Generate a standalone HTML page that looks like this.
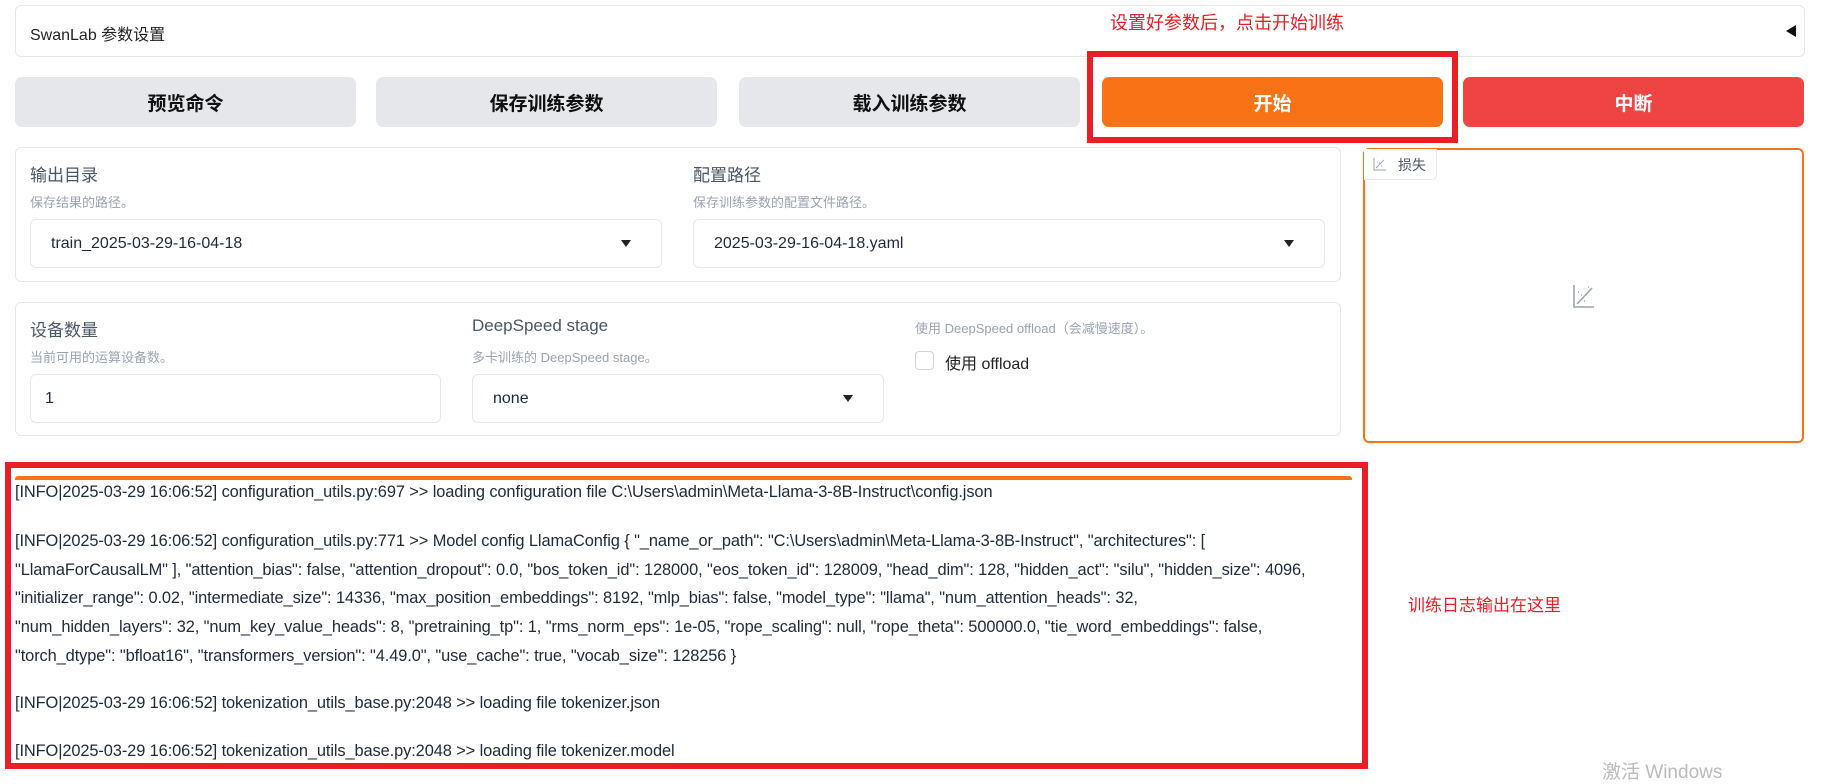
<!DOCTYPE html>
<html><head><meta charset="utf-8">
<style>
*{box-sizing:border-box;margin:0;padding:0}
body{width:1830px;height:774px;background:#fff;position:relative;overflow:hidden;font-family:"Liberation Sans","Noto Sans CJK SC",sans-serif;color:#1f2937}
.abs{position:absolute}
.box{position:absolute;border:1px solid #e5e7eb;border-radius:6px;background:#fff}
.btn{position:absolute;top:77px;height:50px;width:341px;border-radius:7px;background:#e5e7eb;font-weight:bold;font-size:19px;display:flex;align-items:center;justify-content:center;color:#111}
.lbl{position:absolute;font-size:17px;color:#4b5563}
.desc{position:absolute;font-size:13px;color:#9ca3af}
.inp{position:absolute;height:49px;border:1px solid #e5e7eb;border-radius:6px;font-size:16px;color:#1f2937;padding-left:20px;display:flex;align-items:center}
.arr{position:absolute;right:30px;top:20px;width:0;height:0;border-left:5px solid transparent;border-right:5px solid transparent;border-top:7px solid #222}
.log{position:absolute;left:15px;font-size:16.4px;color:#1f2937;white-space:nowrap;letter-spacing:-0.1px}
</style></head><body>
<div class="box" style="left:15px;top:5px;width:1790px;height:52px"></div>
<div class="abs" style="left:30px;top:21px;font-size:16px;color:#222">SwanLab 参数设置</div>
<div class="abs" style="left:1786px;top:25px;width:0;height:0;border-top:6px solid transparent;border-bottom:6px solid transparent;border-right:10px solid #111"></div>
<div class="abs" style="left:1110px;top:9px;font-size:18px;color:#ee1c25">设置好参数后，点击开始训练</div>

<div class="btn" style="left:15px">预览命令</div>
<div class="btn" style="left:376px">保存训练参数</div>
<div class="btn" style="left:739px">载入训练参数</div>
<div class="btn" style="left:1102px;background:#f97316;color:#fff">开始</div>
<div class="btn" style="left:1463px;background:#ef4444;color:#fff">中断</div>
<div class="abs" style="left:1087px;top:51px;width:371px;height:92px;border:6px solid #ee1c25"></div>

<div class="box" style="left:15px;top:147px;width:1326px;height:135px"></div>
<div class="lbl" style="left:30px;top:161px">输出目录</div>
<div class="desc" style="left:30px;top:192px">保存结果的路径。</div>
<div class="inp" style="left:30px;top:219px;width:632px">train_2025-03-29-16-04-18<div class="arr"></div></div>
<div class="lbl" style="left:693px;top:161px">配置路径</div>
<div class="desc" style="left:693px;top:192px">保存训练参数的配置文件路径。</div>
<div class="inp" style="left:693px;top:219px;width:632px">2025-03-29-16-04-18.yaml<div class="arr"></div></div>

<div class="box" style="left:15px;top:302px;width:1326px;height:134px"></div>
<div class="lbl" style="left:30px;top:316px">设备数量</div>
<div class="desc" style="left:30px;top:347px">当前可用的运算设备数。</div>
<div class="inp" style="left:30px;top:374px;width:411px;padding-left:14px">1</div>
<div class="lbl" style="left:472px;top:316px">DeepSpeed stage</div>
<div class="desc" style="left:472px;top:347px">多卡训练的 DeepSpeed stage。</div>
<div class="inp" style="left:472px;top:374px;width:412px">none<div class="arr"></div></div>
<div class="desc" style="left:915px;top:318px">使用 DeepSpeed offload（会减慢速度）。</div>
<div class="abs" style="left:915px;top:351px;width:19px;height:19px;border:1px solid #d1d5db;border-radius:4px"></div>
<div class="abs" style="left:945px;top:350px;font-size:16px;color:#222">使用 offload</div>

<div class="abs" style="left:1363px;top:148px;width:441px;height:295px;border:2px solid #f97316;border-radius:6px"></div>
<div class="abs" style="left:1364px;top:149px;width:73px;height:31px;border:1px solid #e5e7eb;border-top:none;border-left:none;border-radius:0 0 5px 0;background:#fff;font-size:14px;color:#4b5563;padding:6px 0 0 34px">损失</div>
<svg class="abs" style="left:1373px;top:157px" width="14" height="14" viewBox="0 0 14 14" fill="none" stroke="#9ca3af" stroke-width="1"><path d="M1 1V13H13M3 11L11 3M4 5h1M8 9h1M6 6h1"/></svg>
<svg class="abs" style="left:1573px;top:284px" width="22" height="24" viewBox="0 0 22 24" fill="none" stroke="#9ca3af" stroke-width="1.6"><path d="M1 1V23H21M4 20L19 4M5 8h1M11 17h1M8 11h1M15 3h1"/></svg>

<div class="abs" style="left:15px;top:476px;width:1337px;height:4px;background:#f97316;border-radius:3px 3px 0 0"></div>
<div class="log" style="top:483px">[INFO|2025-03-29 16:06:52] configuration_utils.py:697 &gt;&gt; loading configuration file C:\Users\admin\Meta-Llama-3-8B-Instruct\config.json</div>
<div class="log" style="top:532px">[INFO|2025-03-29 16:06:52] configuration_utils.py:771 &gt;&gt; Model config LlamaConfig { "_name_or_path": "C:\Users\admin\Meta-Llama-3-8B-Instruct", "architectures": [</div>
<div class="log" style="top:561px">"LlamaForCausalLM" ], "attention_bias": false, "attention_dropout": 0.0, "bos_token_id": 128000, "eos_token_id": 128009, "head_dim": 128, "hidden_act": "silu", "hidden_size": 4096,</div>
<div class="log" style="top:589px">"initializer_range": 0.02, "intermediate_size": 14336, "max_position_embeddings": 8192, "mlp_bias": false, "model_type": "llama", "num_attention_heads": 32,</div>
<div class="log" style="top:618px">"num_hidden_layers": 32, "num_key_value_heads": 8, "pretraining_tp": 1, "rms_norm_eps": 1e-05, "rope_scaling": null, "rope_theta": 500000.0, "tie_word_embeddings": false,</div>
<div class="log" style="top:647px">"torch_dtype": "bfloat16", "transformers_version": "4.49.0", "use_cache": true, "vocab_size": 128256 }</div>
<div class="log" style="top:694px">[INFO|2025-03-29 16:06:52] tokenization_utils_base.py:2048 &gt;&gt; loading file tokenizer.json</div>
<div class="log" style="top:742px">[INFO|2025-03-29 16:06:52] tokenization_utils_base.py:2048 &gt;&gt; loading file tokenizer.model</div>
<div class="abs" style="left:5px;top:462px;width:1363px;height:307px;border:6px solid #ee1c25"></div>
<div class="abs" style="left:1408px;top:591px;font-size:17px;color:#ee1c25">训练日志输出在这里</div>
<div class="abs" style="left:1602px;top:757px;font-size:19px;color:#bbb">激活 Windows</div>
</body></html>
